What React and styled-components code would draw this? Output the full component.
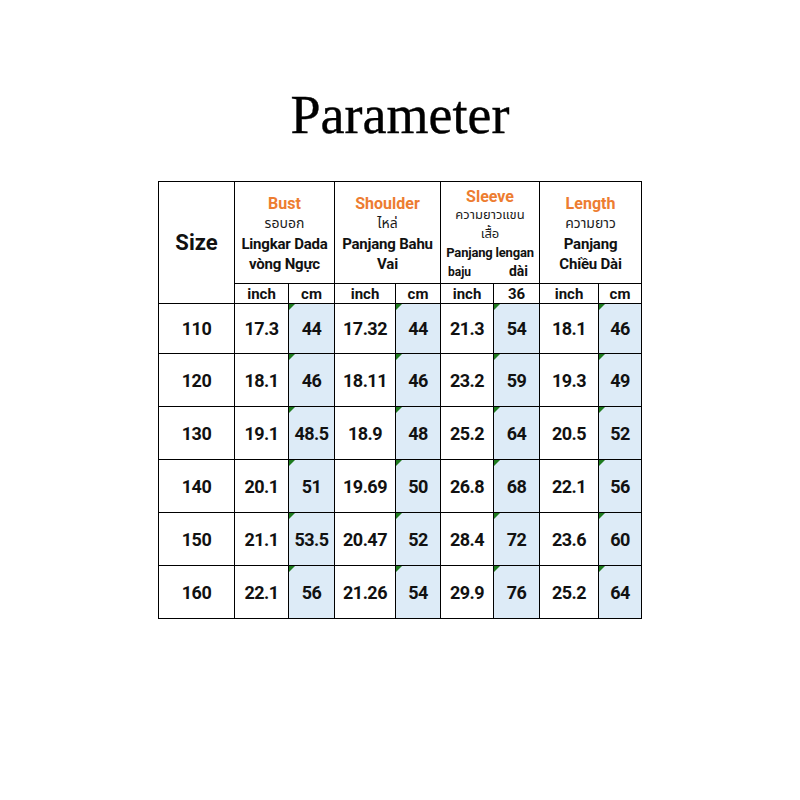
import React from "react";
import styled, { createGlobalStyle } from "styled-components";

const Global = createGlobalStyle`
  html, body { margin: 0; padding: 0; background: #fff; }
  body { font-family: Roboto, "Noto Sans", "DejaVu Sans", sans-serif; }
`;

const Page = styled.div`
  width: 800px;
  height: 800px;
  display: flex;
  flex-direction: column;
  align-items: center;
  padding-top: 85px;
  box-sizing: border-box;
`;

const Title = styled.h1`
  margin: 0 0 36px;
  height: 60px;
  font-family: "Liberation Serif", "Times New Roman", serif;
  font-weight: 400;
  font-size: 54px;
  line-height: 60px;
  color: #000;
  -webkit-text-stroke: 0.4px #000;
`;

const Grid = styled.div`
  display: grid;
  grid-template-columns: 75px 53px 45px 60px 44px 52px 45px 58px 42px;
  grid-template-rows: 101px 19px 49px repeat(5, 52px);
  gap: 1px;
  padding: 1px;
  background: #000;
`;

const Cell = styled.div`
  position: relative;
  background: ${(p) => (p.$blue ? "#ddebf7" : "#fff")};
  display: flex;
  align-items: center;
  justify-content: center;
  font-family: Roboto, "Noto Sans", sans-serif;
  font-weight: 700;
  font-size: ${(p) => p.$size || 17}px;
  letter-spacing: ${(p) => (p.$tight ? "-0.5px" : "0")};
  color: #111;
  ${(p) => p.$span && `grid-column: span ${p.$span};`}
  ${(p) => p.$rows && `grid-row: span ${p.$rows};`}
  &::before {
    content: "";
    display: ${(p) => (p.$mark ? "block" : "none")};
    position: absolute;
    top: 0;
    left: 0;
    border-top: 6px solid #1e7b1e;
    border-right: 6px solid transparent;
  }
`;

const Head = styled.div`
  display: flex;
  flex-direction: column;
  align-items: center;
  text-align: center;
  width: 100%;
  white-space: nowrap;
  padding-top: 2px;
`;

const Label = styled.div`
  color: #ed7d31;
  font-weight: 700;
  font-size: 16px;
  line-height: ${(p) => p.$lh || 20}px;
`;

const Thai = styled.div`
  font-family: "Noto Sans Thai", "Noto Sans", Loma, Garuda, "DejaVu Sans", sans-serif;
  font-weight: 400;
  font-size: ${(p) => p.$size || 14}px;
  color: #1a1a1a;
  line-height: ${(p) => p.$lh || 20}px;
`;

const Line = styled.div`
  font-weight: 700;
  font-size: ${(p) => p.$size || 15}px;
  line-height: ${(p) => p.$lh || 20}px;
  letter-spacing: -0.2px;
  color: #111;
`;

const Split = styled.div`
  display: flex;
  justify-content: space-between;
  align-items: baseline;
  align-self: stretch;
  padding: 0 11px 0 7px;
  line-height: 18px;
`;

const Small = styled.span`
  font-weight: 700;
  font-size: ${(p) => p.$size || 12}px;
  color: #111;
`;

const sub = ["inch", "cm", "inch", "cm", "inch", "36", "inch", "cm"];

const rows = [
  ["110", "17.3", "44", "17.32", "44", "21.3", "54", "18.1", "46"],
  ["120", "18.1", "46", "18.11", "46", "23.2", "59", "19.3", "49"],
  ["130", "19.1", "48.5", "18.9", "48", "25.2", "64", "20.5", "52"],
  ["140", "20.1", "51", "19.69", "50", "26.8", "68", "22.1", "56"],
  ["150", "21.1", "53.5", "20.47", "52", "28.4", "72", "23.6", "60"],
  ["160", "22.1", "56", "21.26", "54", "29.9", "76", "25.2", "64"],
];

export default function App() {
  return (
    <>
      <Global />
      <Page>
        <Title>Parameter</Title>
        <Grid>
          <Cell $rows={2} $size={22}>Size</Cell>
          <Cell $span={2}>
            <Head>
              <Label>Bust</Label>
              <Thai>รอบอก</Thai>
              <Line>Lingkar Dada</Line>
              <Line>vòng Ngực</Line>
            </Head>
          </Cell>
          <Cell $span={2}>
            <Head>
              <Label>Shoulder</Label>
              <Thai>ไหล่</Thai>
              <Line>Panjang Bahu</Line>
              <Line>Vai</Line>
            </Head>
          </Cell>
          <Cell $span={2}>
            <Head>
              <Label $lh={19}>Sleeve</Label>
              <Thai $lh={19} $size={13}>ความยาวแขน</Thai>
              <Thai $lh={18} $size={13}>เสื้อ</Thai>
              <Line $size={13} $lh={19}>Panjang lengan</Line>
              <Split>
                <Small>baju</Small>
                <Small $size={14}>dài</Small>
              </Split>
            </Head>
          </Cell>
          <Cell $span={2}>
            <Head>
              <Label>Length</Label>
              <Thai>ความยาว</Thai>
              <Line>Panjang</Line>
              <Line>Chiều Dài</Line>
            </Head>
          </Cell>
          {sub.map((s, i) => (
            <Cell key={"s" + i} $size={15}>{s}</Cell>
          ))}
          {rows.map((r, ri) =>
            r.map((v, ci) => {
              const cm = ci > 0 && ci % 2 === 0;
              return (
                <Cell key={ri + "-" + ci} $blue={cm} $mark={cm} $tight $size={18}>
                  {v}
                </Cell>
              );
            })
          )}
        </Grid>
      </Page>
    </>
  );
}
